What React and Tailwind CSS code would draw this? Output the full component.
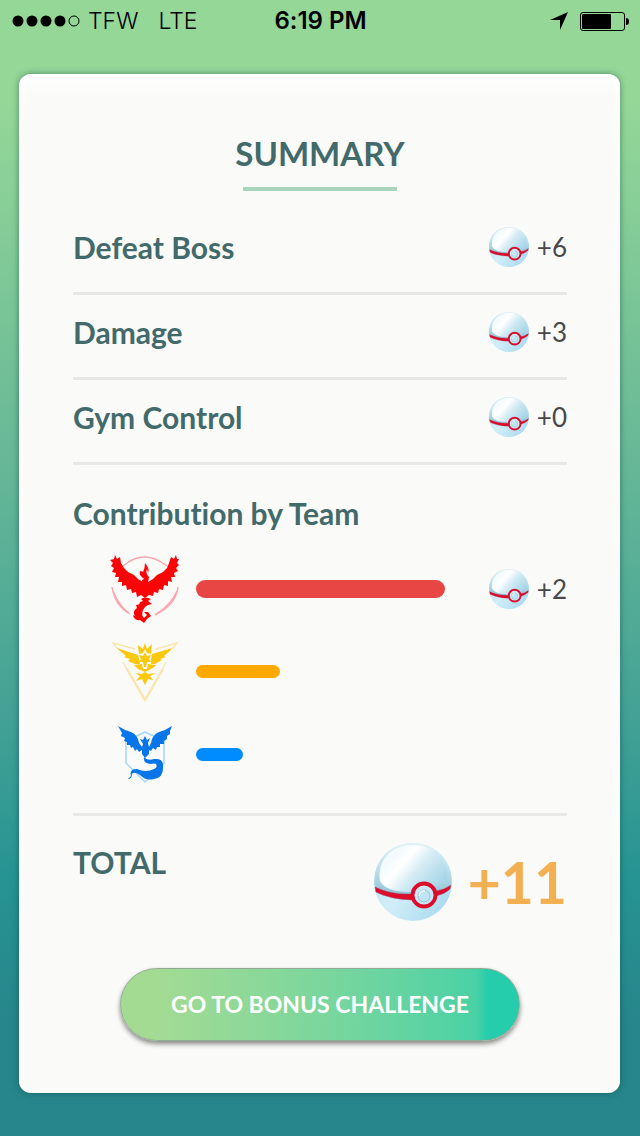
import React from 'react';

const rewards = [
    { label: 'Defeat Boss', amount: 6 },
    { label: 'Damage', amount: 3 },
    { label: 'Gym Control', amount: 0 },
];

const teams = [
    { name: 'Valor', share: 249, bar: 'h-[18px] bg-[#e84645]', Logo: ValorLogo, amount: 2 },
    { name: 'Instinct', share: 84, bar: 'h-[13px] bg-[#ffa800]', Logo: InstinctLogo },
    { name: 'Mystic', share: 47, bar: 'h-[13px] bg-[#008cff]', Logo: MysticLogo },
];

// Widest bar the row has room for
const MAX_SHARE = 249;

function PremierBall({ className }) {
    return (
        <svg viewBox="0 0 78 78" className={className} aria-hidden="true">
            <defs>
                <linearGradient id="shell" x1="0.1" y1="0.2" x2="1" y2="0.75">
                    <stop offset="0.1" stopColor="#f4fbfd" />
                    <stop offset="0.3" stopColor="#ffffff" />
                    <stop offset="0.55" stopColor="#d3ebf4" />
                    <stop offset="1" stopColor="#a3d4e8" />
                </linearGradient>
                <linearGradient id="rim" x1="0" y1="0" x2="0" y2="1">
                    <stop offset="0" stopColor="#e4f2f6" />
                    <stop offset="0.5" stopColor="#bbdfec" />
                    <stop offset="1" stopColor="#8fc3d7" />
                </linearGradient>
                <linearGradient id="base" x1="0" y1="0" x2="1" y2="0.6">
                    <stop offset="0" stopColor="#b2def0" />
                    <stop offset="0.5" stopColor="#d2eef8" />
                    <stop offset="1" stopColor="#aeddf1" />
                </linearGradient>
            </defs>
            <circle cx="39" cy="39" r="39" fill="url(#base)" />
            <path d="M1 45 C-3 18 16 0 39 0 C62 0 80 19 77 42 Q66 50 40 54 Q14 53 1 45Z" fill="url(#rim)" />
            <path d="M6 38 C3 17 18 2 39 2 C61 2 75 18 73 36 Q69 42 60 44 Q48 49 36 49 Q12 49 6 38Z" fill="url(#shell)" />
            <path d="M1 44 Q17 52 38 51 L38 57 Q15 56 2 49Z M62 48 Q70 47 77 42 L76 46 Q71 51 62 53Z" fill="#dc0c2c" stroke="#a04860" strokeWidth="0.5" />
            <circle cx="50" cy="52" r="11.500" fill="#cbe9f5" stroke="#dc0c2c" strokeWidth="3.8" />
            <circle cx="50" cy="53" r="6" fill="#bfe5f5" stroke="#8cc2d9" strokeWidth="1" />
            <path d="M45 53a5 5 0 0 1 6-5" fill="none" stroke="#fff" strokeWidth="1.2" />
        </svg>
    );
}

function ValorLogo() {
    return (
        <svg viewBox="0 0 70 68" className="h-[68px] w-[70px]" role="img" aria-label="Valor">
            <g fill="none" stroke="#fba5ae" strokeWidth="1.4">
                <path d="M13 11 Q34 -7 57 11" />
                <path d="M2 32 Q5 51 20 59 M3 36 Q9 51 19 58 M68 32 Q66 50 45 60 M67 36 Q61 50 46 59" />
            </g>
            <g fill="#fa0505">
                <path d="M5 0 L7 4 L10 2 L11 8 L14 13 L18 17 L24 20 L28 24 L33 27 L35 29 L38 27 L43 24 L47 20 L53 17 L57 13 L59 8 L61 2 L64 4 L66 0 L67 4 L69 4 L67 8 L69 10 L66 13 L68 16 L64 18 L65 22 L61 22 L62 27 L58 26 L58 31 L54 30 L53 35 L49 34 L48 38 L44 37 L43 41 L39 40 L35 43 L31 40 L27 42 L26 37 L22 38 L21 34 L17 35 L16 30 L12 31 L12 27 L8 27 L9 22 L5 22 L6 18 L2 17 L4 13 L1 11 L3 8 L0 5 L4 4Z" />
                <path d="M35 8 Q40 14 38 18 L37 14 Q35 18 39 22 L37 32 H33 L32 25 L34 24 L30 20 Q29 14 33 17 Q35 13 35 8Z" />
                <path d="M31 44 Q35 41 41 44 L38 46 L42 49 L38 50 Q35 51 33 55 Q31 60 34 63 L37 60 L34 57 L38 57 L41 61 L37 64 L34 68 L30 65 Q24 66 23 60 L25 61 Q22 56 27 53 L26 50 Q30 50 30 47 L33 46Z" />
            </g>
        </svg>
    );
}

function InstinctLogo() {
    return (
        <svg viewBox="0 0 70 62" className="h-[62px] w-[70px]" role="img" aria-label="Instinct">
            <g fill="none" stroke="#f9e6ae" strokeWidth="1.4">
                <path d="M25 8 L3 2 L8 8 M46 8 L67 2 L62 8" />
                <path d="M13 21 L20 34 M56 21 L50 33" />
                <path d="M17 28 L35 59 L53 28" strokeWidth="2.4" />
            </g>
            <g fill="#fbc80c">
                <path d="M7 7 L28 14 L29 18 L30 23 L25 23 L18 20 L20 18 L14 16 L16 15 L9 9Z" />
                <path d="M62 7 L42 13 L41 18 L41 23 L45 23 L52 19 L50 18 L56 16 L54 15 L60 10Z" />
                <path d="M35 2 L37 8 L42 3 L41 13 L37 12 L35 8 L33 12 L29 13 L28 4 L33 8Z" />
                <path d="M35 11 L37 15 L41 14 L39 18 L41 21 H37 L36 26 H34 L33 21 H29 L31 18 L29 14 L33 15Z" />
                <path d="M24 24 L32 23 L33 28 H37 L38 23 L46 24 L43 27 L35 31 L28 28Z" />
                <path d="M25 32 L32 33 L35 31 L38 33 L46 32 L40 35 L43 39 L38 38 L35 44 L32 38 L26 40 L30 35Z" />
            </g>
        </svg>
    );
}

function MysticLogo() {
    return (
        <svg viewBox="0 0 54 58" className="h-[58px] w-[54px]" role="img" aria-label="Mystic">
            <path d="M27 6 L46 15 V37 Q41 44 27 56 L8 37 V15Z" fill="none" stroke="#a9d8fc" strokeWidth="1.6" />
            <g fill="#0875e9">
                <path d="M0 0 Q6 4 13 6 Q20 9 21 17 L24 21 L25 18 L22 13 L25 14 L27 10 L29 14 L32 12 L30 17 L31 21 L33 17 Q34 9 41 6 Q48 4 54 0 L52 5 L52 8 L49 10 L49 13 L46 15 L46 18 L42 18 L42 21 L39 21 L38 24 L35 22 L33 25 L31 24 L31 28 L27 32 L24 28 V24 L21 26 L19 23 L17 25 L15 21 L13 22 L12 19 L9 19 L9 16 L6 15 L7 12 L3 10 L4 7Z" />
                <path d="M26 31 Q29 35 36 33 Q45 32 45 39 Q46 52 36 53 Q28 55 22 49 Q16 45 14 48 Q14 53 10 53 L13 50 Q11 43 19 43 Q28 47 36 43 Q40 41 38 38 Q37 37 32 38 Q25 37 26 31Z" />
            </g>
        </svg>
    );
}

function Reward({ amount }) {
    return (
        <div className="flex items-center gap-2 text-[26px] leading-10 text-[#484848]">
            <PremierBall className="size-10" />
            <span>+{amount}</span>
        </div>
    );
}

function StatusBar() {
    return (
        <header className="grid h-[42px] grid-cols-3 items-center pr-[11px] pl-3 font-[Inter,sans-serif] text-[23px] text-black">
            <div className="flex items-center">
                <svg viewBox="0 0 68 12" className="mr-2 h-3 w-[68px]" aria-hidden="true">
                    {[6, 20, 34, 48].map((x) => <circle key={x} cx={x} cy="6" r="5.500" />)}
                    <circle cx="62" cy="6" r="5" fill="none" stroke="black" />
                </svg>
                <span className="mr-5 font-light">TFW</span>
                <span className="font-light">LTE</span>
            </div>
            <time className="text-center text-[24px] font-semibold whitespace-nowrap">6:19 PM</time>
            <div className="flex items-center justify-end gap-3">
                <svg viewBox="0 0 18 18" className="size-[18px]" aria-hidden="true">
                    <path d="M18 0 L10 18 V8 H0Z" />
                </svg>
                <svg viewBox="0 0 49 19" className="h-[19px] w-[49px]" aria-hidden="true">
                    <rect x="0.5" y="0.5" width="44" height="18" rx="2.5" fill="none" stroke="black" />
                    <rect x="2" y="2" width="29" height="15" rx="1" />
                    <path d="M46 6 Q49 6 49 9.500 Q49 13 46 13Z" />
                </svg>
            </div>
        </header>
    );
}

export default function App() {
    return (
        <div className="min-h-screen bg-linear-to-b from-[#94d797] from-9% via-[#269493] via-77% to-[#27868b] to-90% pb-[43px] font-[Lato,sans-serif] [font-variant-ligatures:none]">
            <StatusBar />
            <main className="mr-5 ml-[19px] mt-8 rounded-xl bg-[#fafaf8] pr-[53px] pl-[54px] pt-14 pb-[52px] text-[#426a6b] shadow-[0_0_6px_rgba(0,60,60,0.5),inset_0_12px_14px_#ffffff]">
                <h1 className="mx-auto flex w-[154px] justify-center border-b-4 border-[#a8d5bb] pb-[11px] text-[33px] leading-[46px] font-bold">
                    SUMMARY
                </h1>

                <ul className="pt-[19px]">
                    {rewards.map((reward) => (
                        <li key={reward.label} className="flex h-[85px] items-center justify-between border-b-3 border-[#e8e8e7] pb-2">
                            <h2 className="text-[30px] leading-10 font-bold">{reward.label}</h2>
                            <Reward amount={reward.amount} />
                        </li>
                    ))}
                </ul>

                <section className="border-b-3 border-[#e8e8e7] pt-7 pb-[17px]">
                    <h2 className="text-[30px] leading-10 font-bold">Contribution by Team</h2>
                    <ul className="pt-[14px]">
                        {teams.map(({ name, share, bar, Logo, amount }) => (
                            <li key={name} className="flex h-[83px] items-center">
                                <div className="ml-9 flex w-[72px] justify-center">
                                    <Logo />
                                </div>
                                <div className="mr-4 ml-[15px] flex-1">
                                    <div
                                        className={`rounded-full ${bar}`}
                                        style={{ width: `${(share / MAX_SHARE) * 100}%` }}
                                    />
                                </div>
                                <div className="flex w-[106px] justify-end">
                                    {amount && <Reward amount={amount} />}
                                </div>
                            </li>
                        ))}
                    </ul>
                </section>

                <section className="flex justify-between pt-[26px]">
                    <h2 className="text-[30px] leading-10 font-bold">TOTAL</h2>
                    <div className="flex items-center gap-4 text-[57px] leading-[80px] font-bold text-[#f3b052]">
                        <PremierBall className="size-[78px]" />
                        <span>+11</span>
                    </div>
                </section>

                <button className="mx-auto mt-[46px] flex h-[73px] w-full max-w-[400px] items-center justify-center rounded-full border border-[#91aa93] bg-linear-to-r from-[#a4db93] from-8% via-[#49d1a5] via-89% to-[#25cdac] to-92% text-[23px] font-bold text-white shadow-[0_3px_5px_rgba(0,0,0,0.45)]">
                    GO TO BONUS CHALLENGE
                </button>
            </main>
        </div>
    );
}
